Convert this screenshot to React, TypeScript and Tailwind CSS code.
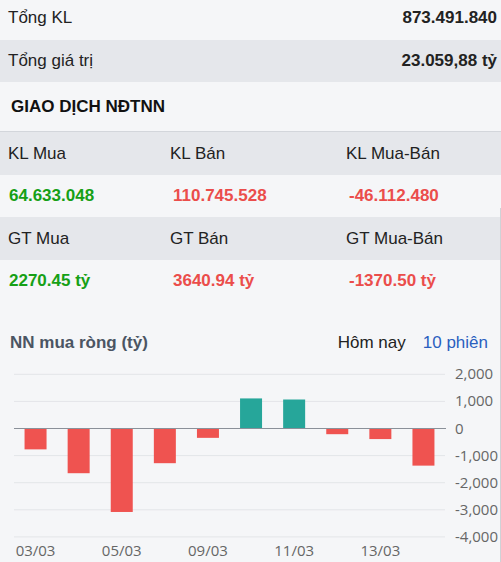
import React from 'react';

const font = { fontFamily: '"Liberation Sans", Arial, sans-serif' };

const bars = [
  { d: '03/03', v: -770 },
  { d: '04/03', v: -1650 },
  { d: '05/03', v: -3080 },
  { d: '06/03', v: -1280 },
  { d: '09/03', v: -345 },
  { d: '10/03', v: 1110 },
  { d: '11/03', v: 1070 },
  { d: '12/03', v: -210 },
  { d: '13/03', v: -390 },
  { d: '16/03', v: -1370 },
];

function Chart() {
  const zero = 67.5;
  const k = 27.1 / 1000;
  const left = 14;
  const step = 43.1;
  const ticks = [2000, 1000, 0, -1000, -2000, -3000, -4000];
  return (
    <svg width="501" height="200" className="block" style={{ fontFamily: '"Open Sans", sans-serif' }}>
      {ticks.map((t) => {
        const y = zero - t * k;
        return (
          <g key={t}>
            {t !== 0 && <line x1={left} x2={445} y1={y} y2={y} stroke="#e3e5e8" strokeWidth="1" />}
            <text x={455} y={y + 5} fontSize="15" fill="#666">
              {t === 0 ? '0' : t.toLocaleString('en-US')}
            </text>
          </g>
        );
      })}
      {bars.map((b, i) => {
        const cx = left + step * i + step / 2;
        const h = Math.abs(b.v) * k;
        const y = b.v >= 0 ? zero - h : zero;
        return (
          <g key={b.d}>
            <rect x={cx - 11} y={y} width="22" height={h} fill={b.v >= 0 ? '#26a69a' : '#ef5350'} />
            {i % 2 === 0 && (
              <text x={cx} y={195} fontSize="15" fill="#666" textAnchor="middle">
                {b.d}
              </text>
            )}
          </g>
        );
      })}
      <line x1={left} x2={446} y1={zero} y2={zero} stroke="#8a9099" strokeWidth="1.2" />
    </svg>
  );
}

function HeadRow({ cells }: { cells: string[] }) {
  return (
    <div className="flex h-[43px] items-center bg-[#e5e7eb] text-[17px] text-[#222]">
      <div className="w-[170px] pl-2">{cells[0]}</div>
      <div className="w-[176px]">{cells[1]}</div>
      <div className="flex-1">{cells[2]}</div>
    </div>
  );
}

function ValueRow({ cells }: { cells: string[] }) {
  return (
    <div className="flex h-[42px] items-center text-[17px] font-bold">
      <div className="w-[173px] pl-[9px] text-[#16a016]">{cells[0]}</div>
      <div className="w-[176px] text-[#eb4d4b]">{cells[1]}</div>
      <div className="flex-1 text-[#eb4d4b]">{cells[2]}</div>
    </div>
  );
}

export default function App() {
  return (
    <div className="relative h-[562px] w-[501px] overflow-hidden bg-[#f5f6f8]" style={font}>
      <div className="flex h-[40px] items-center justify-between pb-1 pl-2 pr-1 text-[17px] text-[#222]">
        <span>Tổng KL</span>
        <span className="font-bold">873.491.840</span>
      </div>
      <div className="flex h-[42px] items-center justify-between bg-[#e5e7eb] pl-2 pr-1 text-[17px] text-[#222]">
        <span>Tổng giá trị</span>
        <span className="font-bold">23.059,88 tỷ</span>
      </div>
      <div className="flex h-[49px] items-center pl-[11px] text-[17px] font-bold text-[#111]">GIAO DỊCH NĐTNN</div>
      <div className="border-t border-[#d3d6db]">
        <HeadRow cells={['KL Mua', 'KL Bán', 'KL Mua-Bán']} />
        <ValueRow cells={['64.633.048', '110.745.528', '-46.112.480']} />
        <HeadRow cells={['GT Mua', 'GT Bán', 'GT Mua-Bán']} />
        <ValueRow cells={['2270.45 tỷ', '3640.94 tỷ', '-1370.50 tỷ']} />
      </div>
      <div className="pt-[30px]">
        <div className="flex h-[22px] items-center justify-between pl-[10px] pr-[13px] text-[17px]">
          <span className="font-bold text-[#4b5563]">NN mua ròng (tỷ)</span>
          <div className="flex gap-[17px]">
            <span className="text-[#222]">Hôm nay</span>
            <span className="text-[#2a5fbf]">10 phiên</span>
          </div>
        </div>
        <div className="pt-[7px]">
          <Chart />
        </div>
      </div>
      <div className="absolute right-0 top-[208px] bottom-0 w-px bg-[#cfd2d6]" />
    </div>
  );
}
